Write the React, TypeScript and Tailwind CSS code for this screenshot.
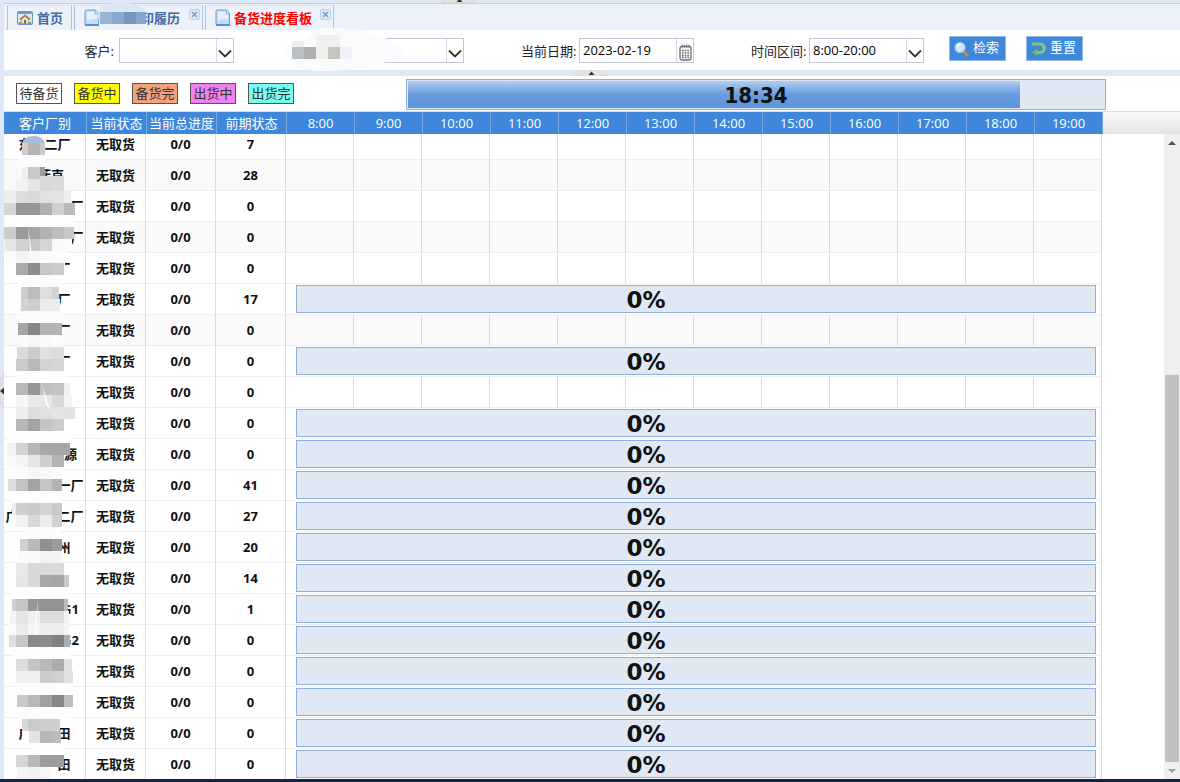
import React, { useState } from 'react';

const HOURS = ['8:00', '9:00', '10:00', '11:00', '12:00', '13:00', '14:00', '15:00', '16:00', '17:00', '18:00', '19:00'];

interface Row {
  name: string;
  prev: number;
  bar?: boolean;
  alt?: boolean;
}

const ROWS: Row[] = [
  { name: '东　二厂', prev: 7 },
  { name: '　菲克', prev: 28, alt: true },
  { name: '　　　　　厂', prev: 0 },
  { name: '　　　　　厂', prev: 0, alt: true },
  { name: '　　　厂', prev: 0 },
  { name: '　　　厂', prev: 17, bar: true },
  { name: '　　　厂', prev: 0, alt: true },
  { name: '　　　厂', prev: 0, bar: true },
  { name: '', prev: 0 },
  { name: '', prev: 0, bar: true },
  { name: '　　　　源', prev: 0, bar: true },
  { name: '　　　　一厂', prev: 41, bar: true },
  { name: '广　　　二厂', prev: 27, bar: true },
  { name: '　　　州', prev: 20, bar: true },
  { name: '', prev: 14, bar: true },
  { name: '　　　　G1', prev: 1, bar: true },
  { name: '　　　　G2', prev: 0, bar: true },
  { name: '', prev: 0, bar: true },
  { name: '', prev: 0, bar: true },
  { name: '广　　田', prev: 0, bar: true },
  { name: '　　　田', prev: 0, bar: true },
];

// y, left edge, right edge, grey level of each 12px cell starting at the cell that holds the left edge
type Band = [number, number, number, string];

const MASK: Band[] = [
  [143, 22, 45, 'cf b5 cb'],
  [155, 21, 46, 'fc fc fc'],
  [167, 22, 45, 'f0 c9 9d'],
  [179, 16, 64, 'f2 e6 da dc'],
  [191, 4, 71, 'ee dc d9 e2 e3 ee'],
  [203, 4, 75, 'd5 96 96 b0 d0 bb'],
  [215, 4, 74, 'fd fd fd fd fd fd'],
  [227, 4, 74, 'cc 9a a5 b3 bd c9'],
  [239, 5, 72, 'e6 d0 c8 d5 f9 fb'],
  [251, 6, 66, 'fa f3 f8 fb fc fd'],
  [263, 16, 65, 'ab 8d c6 cb fd'],
  [275, 18, 62, 'fc fc fc fc'],
  [287, 21, 59, 'ce bd de d3'],
  [299, 21, 60, 'd3 cd ec ec'],
  [311, 20, 61, 'fb fb fb fb'],
  [323, 18, 62, 'a5 86 b3 b3'],
  [335, 17, 63, 'fa f6 fa fc'],
  [347, 17, 64, 'db cd e0 dd'],
  [359, 16, 65, 'cb b8 d2 d5 fe'],
  [371, 16, 65, 'fe fe fe fe fe'],
  [383, 16, 70, 'b8 96 c0 c3 f0'],
  [395, 16, 72, 'f6 ea e8 d9 f3'],
  [407, 16, 75, 'ee dc e0 e4 e2'],
  [419, 16, 64, 'b8 a3 c4 cc'],
  [431, 10, 72, 'fe fe fe fe fe fe'],
  [443, 7, 70, 'f3 d3 b5 a7 a7 a7'],
  [455, 7, 64, 'f8 f5 e5 cf b4'],
  [467, 7, 62, 'fc fa f6 f8 fa'],
  [479, 8, 62, 'dc c2 a3 c5 b3'],
  [491, 9, 62, 'fe fe fe fe fe'],
  [503, 12, 62, 'ee cf ca d3 ca'],
  [515, 15, 62, 'fb f2 d8 ec d0'],
  [527, 23, 60, 'fc fc fc fc'],
  [539, 20, 62, 'd0 b9 90 9c'],
  [551, 18, 62, 'fa fa f3 f4'],
  [563, 16, 64, 'e8 d8 d8 d9'],
  [575, 16, 69, 'e6 d8 a8 a5 ca'],
  [587, 14, 68, 'fe fe fe fe fe fe'],
  [599, 12, 68, 'cf c4 97 92 92 bb'],
  [611, 10, 69, 'f4 e6 ef dc dc f2'],
  [623, 9, 69, 'fa eb f4 ee ee f6'],
  [635, 9, 70, 'dd c7 89 8b 80 af'],
  [647, 12, 70, 'fe fe fe fe fe fe'],
  [659, 16, 72, 'dd c5 b8 ac e2'],
  [671, 16, 73, 'f0 f0 cd d0 e0'],
  [683, 16, 72, 'fd fd fd fd fd'],
  [695, 17, 73, 'c9 b8 a0 87 bd'],
  [707, 18, 69, 'fd fd fd fd fd'],
  [719, 22, 60, 'd8 cb cf cf'],
  [731, 29, 61, 'e3 b8 bc'],
  [743, 30, 62, 'fe fe fe'],
  [755, 16, 64, 'd5 b8 9d 9d'],
  [767, 17, 50, 'f4 f2 f6'],
];

function NameMask() {
  return (
    <svg className="absolute left-0 top-0 pointer-events-none" width="88" height="645" viewBox="4 134 88 645" shapeRendering="crispEdges" aria-hidden="true">
      <path d="M22 143Q24 136 34 136Q43 136 45 143Z" fill="#a9bcd8" shapeRendering="auto" />
      {MASK.map(([y, left, right, cells]) => {
        const start = 4 + Math.floor((left - 4) / 12) * 12;
        return cells.split(' ').map((c, i) => {
          const x1 = Math.max(left, start + i * 12);
          const x2 = Math.min(right, start + (i + 1) * 12);
          return x2 > x1 ? <rect key={y + '-' + i} x={x1} y={y} width={x2 - x1} height={12} fill={`#${c}${c}${c}`} /> : null;
        });
      })}
      <path d="M40 176h24v3h-24z" fill="#dadada" />
      <path d="M28 227L33 263L30 251ZM42 384L50 411L46 404ZM38 599L36 635L34 635Z" fill="#fff" shapeRendering="auto" />
    </svg>
  );
}

function PageIcon() {
  return (
    <svg width="16" height="18" viewBox="0 0 16 18" aria-hidden="true">
      <path d="M2.500 1H11.500L14.500 4.500V16.500H2.500A1.500 1.500 0 0 1 1 15V2.500A1.500 1.500 0 0 1 2.500 1Z" fill="#c3dcf8" stroke="#6c9bd2" />
      <path d="M3 3H10V6H13V10Q7 9 3 12Z" fill="#e4f0fd" />
      <path d="M11.500 1V4.500H14.500Z" fill="#fff" stroke="#7ba6d8" strokeWidth=".8" />
      <path d="M1 15H15V17H1Z" fill="#5c91cd" />
    </svg>
  );
}

function HomeIcon() {
  return (
    <svg width="16" height="14" viewBox="0 0 16 14" aria-hidden="true">
      <rect x=".5" y=".5" width="15" height="13" rx="1" fill="#d8e6f5" stroke="#6f93bf" />
      <path d="M1 1h14v2H1Z" fill="#6f9bd0" />
      <path d="M2.500 8L8 3.500L13.500 8L12.500 9L8 5.500L3.500 9Z" fill="#9c6b3c" />
      <path d="M4.500 8.200L8 5.500L11.500 8.200V12.500H4.500Z" fill="#f4dfb0" stroke="#a9845a" strokeWidth=".6" />
      <path d="M7 9h2v3.500H7Z" fill="#8a6a4a" />
      <path d="M1.500 11h3v2h-3ZM11.500 11h3v2h-3Z" fill="#7cab6a" />
    </svg>
  );
}

function CloseButton() {
  return (
    <button aria-label="关闭" className="absolute right-[2px] top-[3px] flex size-[11px] items-center justify-center rounded-[2px] border border-[#b4d0ec] bg-[#dcebf9]">
      <svg width="7" height="7" viewBox="0 0 7 7" aria-hidden="true">
        <path d="M1 1L6 6M6 1L1 6" stroke="#7ba0c8" strokeWidth="1.700" />
      </svg>
    </button>
  );
}

function Collapser({ className }: { className: string }) {
  return (
    <svg className={className} width="34" height="6" viewBox="0 0 34 6" aria-hidden="true">
      <path d="M0 6L4 1Q5 0 7 0H27Q29 0 30 1L34 6Z" fill="#e4e4e2" stroke="#cfd3da" strokeWidth=".6" />
      <path d="M14.500 5L17.500 1.500L20.500 5Z" fill="#333" />
    </svg>
  );
}

function SelectBox({ id, label, options }: { id: string; label?: string; options: string[] }) {
  return (
    <div className="flex items-center gap-[5px]">
      <label htmlFor={id} className="w-[53px] whitespace-nowrap text-right">{label}</label>
      <div className="relative h-[25px] w-[115px] border border-[#c3c6d6] bg-white">
        <select id={id} aria-label={label ? undefined : '客户名称'} className="block size-full appearance-none bg-transparent pb-[2px] pl-[3px] pr-5 text-black outline-none">
          {options.map(o => <option key={o}>{o}</option>)}
        </select>
        <span className="pointer-events-none absolute inset-y-0 right-0 flex w-[17px] items-center justify-center border-l border-[#d5d7e2] pt-[6px]">
          <svg width="14" height="9" viewBox="0 0 14 9" aria-hidden="true">
            <path d="M1 1.500L7 7.500L13 1.500" fill="none" stroke="#333" strokeWidth="1.800" />
          </svg>
        </span>
      </div>
    </div>
  );
}

const tabClass = 'relative flex h-[25px] items-center border-x border-t border-x-[#a9c4e6] border-t-[#dbe6f5] bg-[#edf2fa] font-bold whitespace-nowrap';

export default function App() {
  const [date, setDate] = useState('2023-02-19');

  return (
    <div className="flex h-screen flex-col overflow-hidden bg-[#dfe8f6] font-['Open_Sans','Noto_Sans_CJK_SC',sans-serif] text-[13px] leading-[18px] text-[#222]">
      <div className="relative flex min-h-0 flex-1 flex-col pl-1">
        <div className="relative h-[3px] shrink-0">
          <Collapser className="absolute -top-[3px] left-[438px]" />
        </div>

        <nav className="relative flex h-[27px] shrink-0 gap-[2px] border-t border-[#b9cfee] bg-[#edf2fa] pl-[3px] pt-px">
          <a href="#home" className={tabClass + ' w-[65px] gap-1 pl-[9px] text-[#416aa3]'}>
            <HomeIcon />首页
          </a>
          <a href="#history" className={tabClass + ' w-[129px] pl-[9px] text-[#416aa3]'}>
            <PageIcon />
            <span className="ml-[41px]">印履历</span>
            <CloseButton />
          </a>
          <a href="#board" className={tabClass + ' w-[129px] gap-[3px] pl-[9px] text-[#ff0000]'}>
            <PageIcon />备货进度看板
            <CloseButton />
          </a>
          <svg className="pointer-events-none absolute left-[93px] -top-[3px]" width="54" height="30" viewBox="97 0 54 30" aria-hidden="true">
            <path d="M98 14Q99 4 112 2Q130 0 140 5Q146 9 145 15V23H104Q98 22 98 14Z" fill="#dbe6f5" />
            <g shapeRendering="crispEdges">
              <path d="M100 11h12v12h-12z" fill="#97b3d6" />
              <path d="M112 11h12v12h-12z" fill="#8ba9cf" />
              <path d="M124 11h12v12h-12z" fill="#7396c5" />
              <path d="M136 11h10v12h-10z" fill="#86a4cd" />
            </g>
          </svg>
        </nav>

        <form className="relative flex h-10 shrink-0 bg-white pl-[57px] pt-2" onSubmit={e => e.preventDefault()}>
          <div className="flex h-[25px] gap-[57px]">
            <SelectBox id="customer" label="客户:" options={['']} />
            <SelectBox id="plant" options={['']} />
            <div className="flex items-center gap-[5px]">
              <label htmlFor="date" className="w-[53px] whitespace-nowrap text-right">当前日期:</label>
              <div className="relative h-[25px] w-[115px] border border-[#c3c6d6] bg-white">
                <input id="date" type="text" value={date} onChange={e => setDate(e.target.value)} className="block size-full bg-transparent pb-[2px] pl-[3px] pr-5 text-black outline-none" />
                <span className="pointer-events-none absolute inset-y-0 right-0 flex w-[17px] items-center justify-center border-l border-[#d5d7e2] pt-1">
                  <svg width="13" height="17" viewBox="0 0 13 17" aria-hidden="true">
                    <rect x="1" y="2.500" width="11" height="13.500" rx="2" fill="#f6f6f6" stroke="#6d6d6d" strokeWidth="1.300" />
                    <path d="M3 .5v3M5.300 .5v3M7.700 .5v3M10 .5v3" stroke="#6d6d6d" />
                    <path d="M3 6.500h7M3 9h7M3 11.500h7M3 13.500h7" stroke="#666" strokeWidth="1.300" strokeDasharray="1.500 1.200" />
                  </svg>
                </span>
              </div>
            </div>
            <SelectBox id="range" label="时间区间:" options={['8:00-20:00']} />
          </div>
          <div className="-mt-[2px] ml-[25px] flex gap-5">
            <button className="flex h-[25px] w-[57px] items-center gap-1 border border-[#8fb9ec] bg-[#3f87db] pl-[4px] text-white">
              <svg width="15" height="16" viewBox="0 0 15 16" aria-hidden="true">
                <path d="M9 10L13 14" stroke="#c98a55" strokeWidth="3" strokeLinecap="round" />
                <circle cx="6" cy="6.500" r="5" fill="#cfe6fa" stroke="#a4c9ee" strokeWidth="1.200" />
                <path d="M3 6Q3.500 3.500 6 3.200" fill="none" stroke="#fff" strokeWidth="1.400" />
              </svg>
              <span className="pb-1">检索</span>
            </button>
            <button type="reset" className="flex h-[25px] w-[57px] items-center gap-1 border border-[#8fb9ec] bg-[#3f87db] pl-[4px] text-white">
              <svg width="15" height="15" viewBox="0 0 15 15" aria-hidden="true">
                <path d="M1 3H9A4.200 4.200 0 0 1 9 11.500H5" fill="none" stroke="#84c578" strokeWidth="3.200" />
                <path d="M6 7.500V15L1 11.500Z" fill="#6fb862" />
              </svg>
              <span className="pb-1">重置</span>
            </button>
          </div>
          <svg className="pointer-events-none absolute -top-[3px] left-[280px]" width="122" height="45" viewBox="284 27 122 45" aria-hidden="true">
            <path d="M284 50Q288 42 308 38Q310 29 325 28Q360 27 382 37Q402 44 405 52Q400 60 382 63Q350 72 320 71Q294 70 290 60Z" fill="#fafbfd" />
            <g shapeRendering="crispEdges">
              <path d="M292 41h12v6h-12z" fill="#efefef" />
              <path d="M292 47h12v12h-12z" fill="#bcbfc4" />
              <path d="M304 47h12v12h-12z" fill="#b2afb4" />
              <path d="M316 35h24v24h-24z" fill="#f0f0ee" />
              <path d="M340 47h12v12h-12z" fill="#eef2f6" />
              <path d="M328 47h12v12h-12z" fill="#c8c3be" />
            </g>
          </svg>
        </form>

        <div className="relative h-[6px] shrink-0">
          <Collapser className="absolute left-[570px] top-0" />
        </div>

        <div className="flex h-[35px] shrink-0 bg-white pl-3 pt-[3px]">
          <ul className="flex gap-3 pt-1 text-center leading-[18px] text-[#333] *:h-[21px] *:w-[46px] *:whitespace-nowrap *:border *:border-[#555]">
            <li className="bg-white">待备货</li>
            <li className="bg-[#ffff00]">备货中</li>
            <li className="bg-[#f4a27c]">备货完</li>
            <li className="bg-[#ee82ee]">出货中</li>
            <li className="bg-[#78fdf0]">出货完</li>
          </ul>
          <div className="relative ml-[112px] h-[31px] w-[700px] border border-[#8fb0dc] bg-[#e0e8f3] p-px">
            <div className="h-full w-[88%] bg-linear-to-b from-[#b3cdf1] from-0% via-[#6a9cde] via-50% to-[#5c94db]" />
            <span className="absolute inset-0 text-center font-['DejaVu_Sans_Condensed','DejaVu_Sans',sans-serif] text-[22px] font-bold leading-[31px] text-[#111]">18:34</span>
          </div>
        </div>

        <div className="h-[23px] shrink-0 border-t border-[#cfe0f5] bg-linear-to-b from-[#fafafa] to-[#e2e3e5]">
          <table className="w-[1099px] table-fixed border-separate border-spacing-0 text-white">
            <thead>
              <tr className="h-[22px] bg-[#3f87db] *:overflow-hidden *:whitespace-nowrap *:border-r *:border-[#79a4d8] *:p-0 *:font-normal">
                <th className="w-[83px]">客户厂别</th>
                <th className="w-[60px]">当前状态</th>
                <th className="w-[70px]">当前总进度</th>
                <th className="w-[70px]">前期状态</th>
                {HOURS.map(h => <th key={h} className="w-[68px]">{h}</th>)}
              </tr>
            </thead>
          </table>
        </div>

        <div className="flex min-h-0 flex-1 bg-white">
          <div className="relative min-w-0 flex-1 overflow-hidden">
            <table className="-mt-[5px] w-[1098px] table-fixed border-separate border-spacing-0 text-center text-[#111]">
              <colgroup>
                <col className="w-[82px]" />
                <col className="w-[60px]" />
                <col className="w-[70px]" />
                <col className="w-[70px]" />
                {HOURS.map(h => <col key={h} className="w-[68px]" />)}
              </colgroup>
              <tbody>
                {ROWS.map((row, i) => (
                  <tr key={i} className={'h-[31px] font-bold *:border-b *:border-r *:border-b-[#efefef] *:border-r-[#dcdcdc] *:p-0 ' + (row.alt ? 'bg-[#fafafa]' : 'bg-white')}>
                    <td className="whitespace-pre">{row.name}</td>
                    <td>无取货</td>
                    <td>0/0</td>
                    <td>{row.prev}</td>
                    {row.bar ? (
                      <td colSpan={12}>
                        <div className="ml-[10px] h-7 w-[800px] border border-[#8fb0dc] bg-[#e0e8f3]">
                          <div className="w-[698px] font-['DejaVu_Sans',sans-serif] text-[23px] leading-7 text-[#111]">0%</div>
                        </div>
                      </td>
                    ) : (
                      HOURS.map(h => <td key={h} />)
                    )}
                  </tr>
                ))}
              </tbody>
            </table>
            <NameMask />
          </div>

          <div className="flex w-4 shrink-0 flex-col bg-[#f0f0f0]">
            <svg width="16" height="17" viewBox="0 0 16 17" aria-hidden="true"><path d="M4 11L8 7L12 11Z" fill="#505050" /></svg>
            <div className="grow-[224]" />
            <div className="mx-px grow-[388] bg-[#c1c1c1]" />
            <svg width="16" height="17" viewBox="0 0 16 17" aria-hidden="true"><path d="M4 7L8 11L12 7Z" fill="#a0a0a0" /></svg>
          </div>
        </div>

        <svg className="absolute left-0 top-[374px]" width="4" height="34" viewBox="0 0 4 34" aria-hidden="true">
          <path d="M4 0Q0 3 0 7V27Q0 31 4 34Z" fill="#e4e4e2" stroke="#c8ccd2" strokeWidth=".6" />
          <path d="M4 13.500L0 17L4 20.500Z" fill="#333" />
        </svg>
      </div>
      <div className="h-[3px] shrink-0 bg-[#142647]" />
    </div>
  );
}
